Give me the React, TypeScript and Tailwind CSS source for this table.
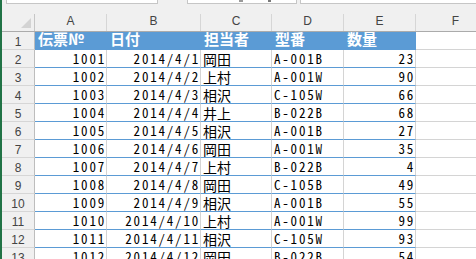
import React from "react";

type Row = [string, string, string, string, string];

const rows: Row[] = [
  ["1001", "2014/4/1", "岡田", "A-001B", "23"],
  ["1002", "2014/4/2", "上村", "A-001W", "90"],
  ["1003", "2014/4/3", "相沢", "C-105W", "66"],
  ["1004", "2014/4/4", "井上", "B-022B", "68"],
  ["1005", "2014/4/5", "相沢", "A-001B", "27"],
  ["1006", "2014/4/6", "岡田", "A-001W", "35"],
  ["1007", "2014/4/7", "上村", "B-022B", "4"],
  ["1008", "2014/4/8", "岡田", "C-105B", "49"],
  ["1009", "2014/4/9", "相沢", "A-001B", "55"],
  ["1010", "2014/4/10", "上村", "A-001W", "99"],
  ["1011", "2014/4/11", "相沢", "C-105W", "93"],
  ["1012", "2014/4/12", "岡田", "B-022B", "54"],
];

const colW = ["w-[72px]", "w-[94px]", "w-[71px]", "w-[72px]", "w-[72px]"];
const headers = ["伝票№", "日付", "担当者", "型番", "数量"];
const letters = ["A", "B", "C", "D", "E", "F"];
const letterW = ["w-[72px]", "w-[94px]", "w-[71px]", "w-[72px]", "w-[72px]", "w-[80px]"];

const latinFont = {
  fontFamily: "'Noto Sans CJK JP', sans-serif",
  fontFeatureSettings: '"hwid"',
};
const kanjiFont = { fontFamily: "'Liberation Sans', 'Noto Sans CJK JP', sans-serif" };
const headFont = { fontFamily: "'Noto Sans CJK JP', sans-serif" };
const uiFont = { fontFamily: "'Liberation Sans', Arial, sans-serif" };

function RowHead({ n }: { n: number }) {
  return (
    <div
      className="w-[33px] shrink-0 h-[18px] bg-[#f0f0f0] border-r border-b border-r-[#bdbdbd] border-b-[#d6d6d6] text-center text-[12px] leading-[14px] pt-[3px] text-[#444]"
      style={uiFont}
    >
      {n}
    </div>
  );
}

export default function App() {
  return (
    <div className="w-[476px] h-[259px] overflow-hidden bg-[#f0f0f0] flex">
      <div className="w-[2px] shrink-0 bg-[#217346]" />
      <div className="flex-1 flex flex-col min-w-0">
        {/* formula bar remnants */}
        <div className="h-[14px] shrink-0 flex items-start">
          <div className="ml-[4px] w-[152px] h-[4px] bg-white border border-t-0 border-[#c6c6c6]" />
          <div className="ml-[29px] w-[110px] h-[4px] bg-white border border-t-0 border-[#c6c6c6] flex items-start">
            <div className="ml-[51px] w-[4px] h-[2px] bg-[#9a9a9a]" />
            <div className="ml-[25px] w-[3px] h-[2px] bg-[#7a7a7a]" />
          </div>
          <div className="ml-[3px] flex-1 h-[4px] bg-white border border-t-0 border-r-0 border-[#c6c6c6]" />
        </div>

        {/* column headers */}
        <div className="flex h-[18px] shrink-0 bg-[#f0f0f0] border-b border-[#ababab]">
          <div className="w-[33px] shrink-0 h-full border-r border-[#c6c6c6] flex items-end justify-end pr-[3px] pb-[3px]">
            <svg width="10" height="10" viewBox="0 0 10 10">
              <polygon points="10,0 10,10 0,10" fill="#d3d3d3" />
            </svg>
          </div>
          {letters.map((l, i) => (
            <div
              key={l}
              className={`${letterW[i]} shrink-0 h-full border-r border-[#d6d6d6] text-center text-[12px] leading-[14px] pt-[0px] text-[#444]`}
              style={uiFont}
            >
              {l}
            </div>
          ))}
        </div>

        {/* row 1 header */}
        <div className="flex h-[18px] shrink-0">
          <RowHead n={1} />
          {headers.map((h, i) => (
            <div
              key={h}
              className={`${colW[i]} shrink-0 h-[18px] bg-[#5b9bd5] text-white font-bold text-[15px] leading-[14px] pl-[3px] whitespace-nowrap`}
              style={headFont}
            >
              {h}
            </div>
          ))}
          <div className="w-[80px] shrink-0 h-[18px] bg-white border-r border-b border-[#d4d4d4]" />
        </div>

        {rows.map((r, ri) => (
          <div key={ri} className="flex h-[18px] shrink-0">
            <RowHead n={ri + 2} />
            {r.map((v, ci) => {
              const right = ci === 0 || ci === 1 || ci === 4;
              const kanji = ci === 2;
              return (
                <div
                  key={ci}
                  className={`${colW[ci]} shrink-0 h-[18px] bg-white border-r border-b border-r-[#d4d4d4] border-b-[#5b9bd5] leading-[14px] whitespace-nowrap text-black ${
                    kanji ? "text-[14px] pt-[3px]" : "text-[13px] tracking-[1.8px] pt-[2px]"
                  } ${right ? "text-right pr-[0px]" : "text-left pl-[2px]"}`}
                  style={kanji ? kanjiFont : latinFont}
                >
                  {v}
                </div>
              );
            })}
            <div className="w-[80px] shrink-0 h-[18px] bg-white border-r border-b border-[#d4d4d4]" />
          </div>
        ))}
      </div>
    </div>
  );
}
